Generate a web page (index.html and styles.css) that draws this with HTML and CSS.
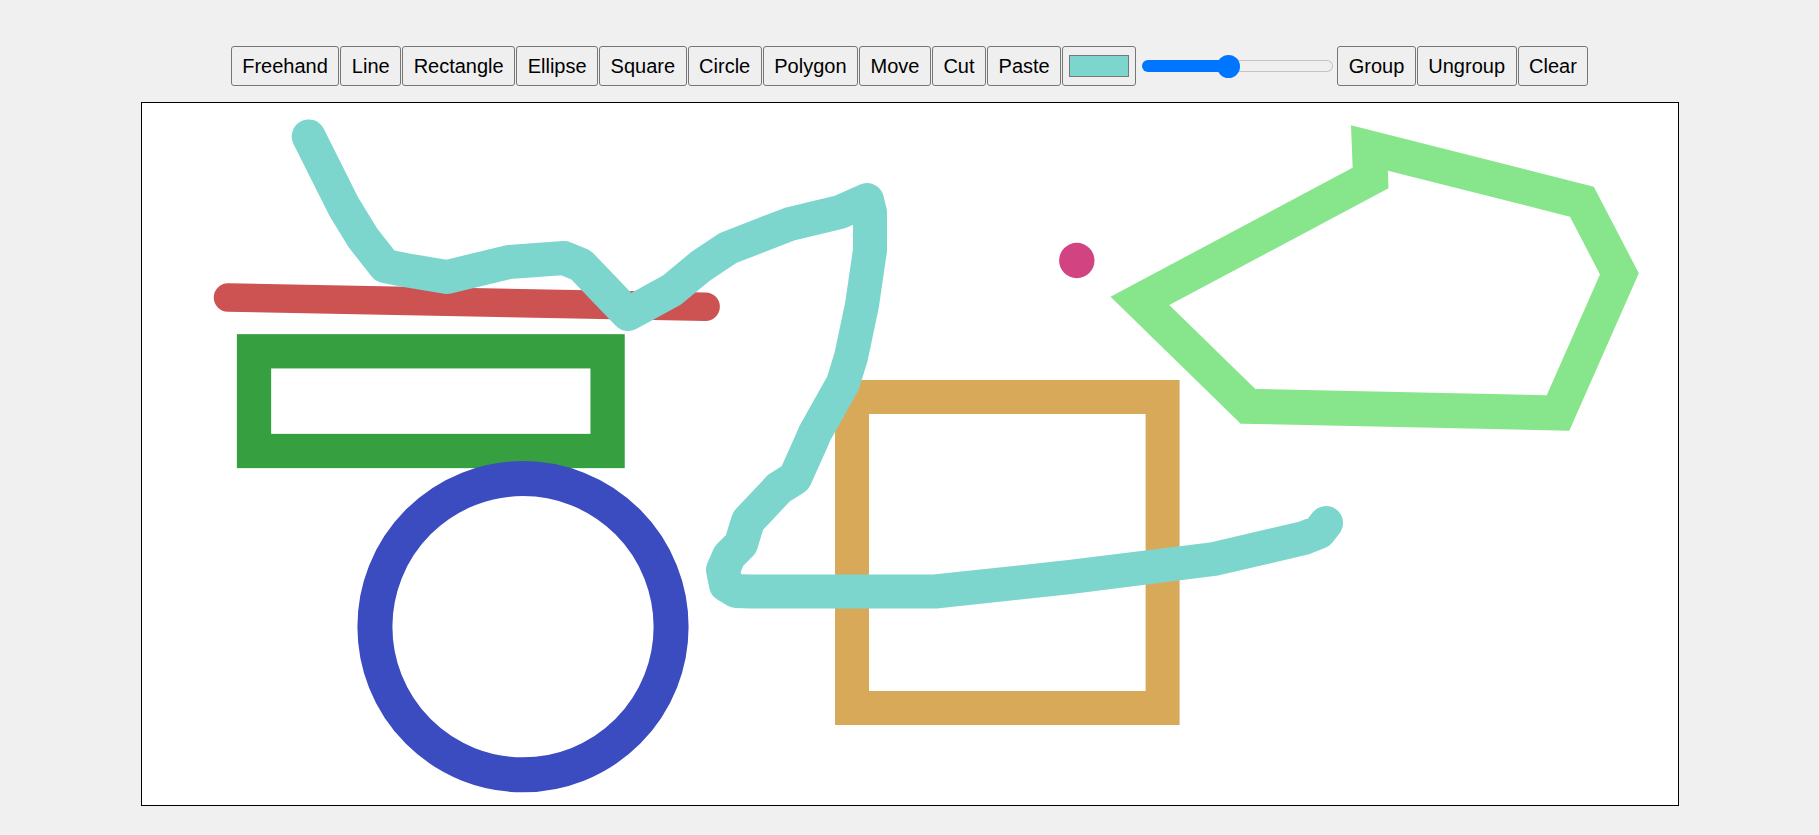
FILE: index.html
```html
<!DOCTYPE html>
<html lang="en">
<head>
<meta charset="utf-8">
<title>Paint</title>
<link rel="stylesheet" href="styles.css">
</head>
<body>
<div class="toolbar">
  <button class="tool">Freehand</button>
  <button class="tool">Line</button>
  <button class="tool">Rectangle</button>
  <button class="tool">Ellipse</button>
  <button class="tool">Square</button>
  <button class="tool">Circle</button>
  <button class="tool">Polygon</button>
  <button class="tool">Move</button>
  <button class="tool">Cut</button>
  <button class="tool">Paste</button>
  <input class="color" type="color" value="#7dd6cd">
  <input class="size" type="range" min="0" max="100" value="45">
  <button class="tool">Group</button>
  <button class="tool">Ungroup</button>
  <button class="tool">Clear</button>
</div>
<div class="board">
  <svg class="drawing" viewBox="141 103 1536 702" width="1536" height="702" xmlns="http://www.w3.org/2000/svg">
    <line x1="227" y1="297.5" x2="704.6" y2="306.7" stroke="#cd5353" stroke-width="28.5" stroke-linecap="round"/>
    <rect x="253" y="351.3" width="353.6" height="99.7" fill="none" stroke="#369f40" stroke-width="34.3"/>
    <circle cx="522" cy="626.7" r="148.1" fill="none" stroke="#3b4bc0" stroke-width="35"/>
    <rect x="851" y="397" width="310.6" height="311" fill="none" stroke="#d9a95a" stroke-width="34"/>
    <path d="M307.7,136.5 L343,207 L362,238 L384,266 L404,270 L446,277 L508,262 L563,258 L580,265 L627,314 L640,307 L671,290 L700,266 L727,248 L789,224 L839,212 L866,200 L869,212 L869,250 L861,305 L850,357 L842,383 L814,433 L811,440 L794,478 L778,488 L747,521 L740,544 L728,556 L722,570 L725,585 L735,591 L750,591.5 L934,591.5 L1069,577 L1213,559 L1303,538 L1318,532 L1325,523" fill="none" stroke="#7dd6cd" stroke-width="34" stroke-linecap="round" stroke-linejoin="round"/>
    <circle cx="1075.8" cy="260.5" r="17.7" fill="#d14481"/>
    <polygon points="1368.4,148 1580.9,201.7 1618.4,273.8 1557,413 1247,406.3 1138.9,300.9 1369.6,178" fill="none" stroke="#87e68b" stroke-width="35" stroke-linejoin="miter"/>
  </svg>
</div>
</body>
</html>
```

FILE: styles.css
```css
html, body {
  margin: 0;
  padding: 0;
  background: #f0f0f0;
}

body {
  font-family: "Liberation Sans", Arial, sans-serif;
}

.toolbar {
  display: flex;
  justify-content: center;
  align-items: center;
  gap: 1px;
  padding-top: 46px;
}

.tool {
  font-family: "Liberation Sans", Arial, sans-serif;
  font-size: 20px;
  line-height: 23px;
  color: #000;
  background: #efefef;
  border: 1px solid #767676;
  border-radius: 3px;
  padding: 7.5px 10.5px;
  margin: 0;
  height: 40px;
  box-sizing: border-box;
}

.color {
  -webkit-appearance: none;
  appearance: none;
  width: 74px;
  height: 40px;
  box-sizing: border-box;
  padding: 8px 6px;
  margin: 0;
  border: 1px solid #767676;
  border-radius: 3px;
  background: #efefef;
}

.color::-webkit-color-swatch-wrapper {
  padding: 0;
}

.color::-webkit-color-swatch {
  border: 1px solid #777;
  border-radius: 0;
}

.size {
  -webkit-appearance: none;
  appearance: none;
  width: 191px;
  height: 23px;
  margin: 0 3.5px 0 4.5px;
  padding: 0;
  background: transparent;
}

.size::-webkit-slider-runnable-track {
  box-sizing: border-box;
  height: 12px;
  border-radius: 6px;
  border: 1px solid transparent;
  background:
    linear-gradient(to right, #0075ff 45.5%, #efefef 45.5%) padding-box,
    linear-gradient(to right, #0075ff 45.5%, #c4c4c4 45.5%) border-box;
}

.size::-webkit-slider-thumb {
  -webkit-appearance: none;
  appearance: none;
  width: 23px;
  height: 23px;
  border-radius: 50%;
  background: #0075ff;
  border: none;
  margin-top: -6.5px;
}

.board {
  width: 1536px;
  height: 702px;
  margin: 16px auto 0;
  border: 1px solid #000;
  background: #fff;
}

.drawing {
  display: block;
}
```
